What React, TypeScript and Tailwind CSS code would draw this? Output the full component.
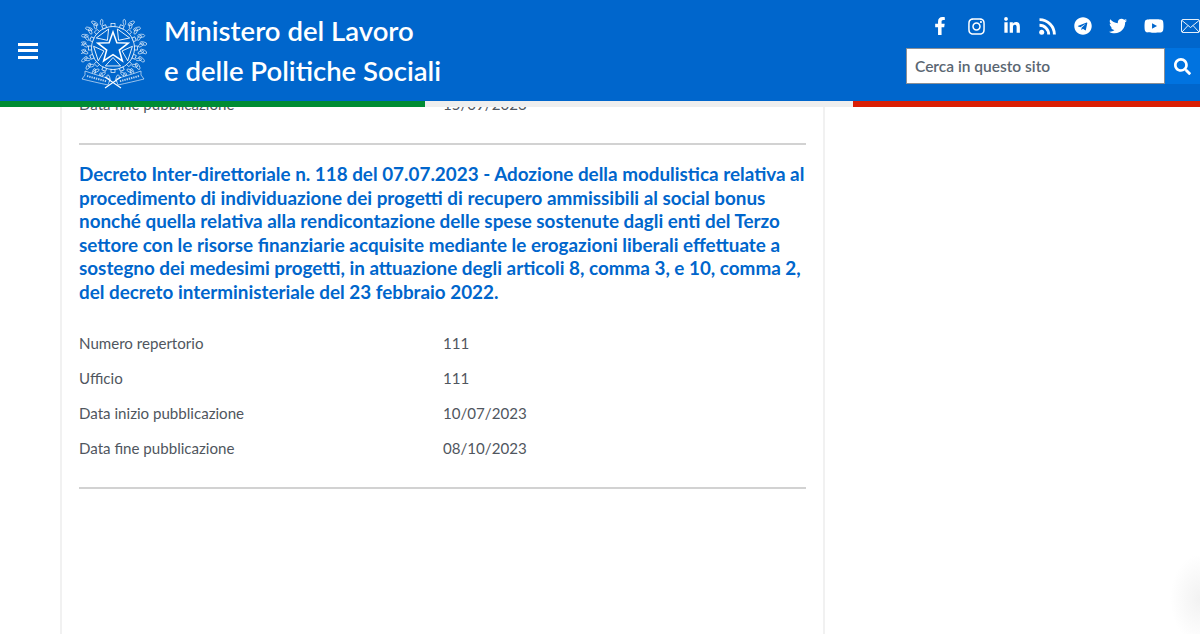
import { FaFacebookF, FaInstagram, FaLinkedinIn, FaTelegram, FaTwitter, FaYoutube, FaSearch } from 'react-icons/fa';

const rows = [
  { label: 'Numero repertorio', value: '111' },
  { label: 'Ufficio', value: '111' },
  { label: 'Data inizio pubblicazione', value: '10/07/2023' },
  { label: 'Data fine pubblicazione', value: '08/10/2023' },
];

// polar helper, 0deg points up
const p = (r: number, deg: number) => {
  const a = ((deg - 90) * Math.PI) / 180;
  return `${(32 + r * Math.cos(a)).toFixed(2)} ${(34 + r * Math.sin(a)).toFixed(2)}`;
};

function Emblem() {
  const wedges = [36, 108, 180, 252, 324];
  const star = Array.from({ length: 10 }, (_, i) => p(i % 2 ? 6.6 : 16, i * 36)).join(' L ');
  const teeth = Array.from({ length: 16 }, (_, i) => i * 22.5);
  const leftLeaves = [195, 210, 225, 240, 255, 270, 285, 300, 315, 330];
  const rightLeaves = [165, 150, 135, 120, 105, 90, 75, 60, 45, 30];
  return (
    <svg width="66" height="75" viewBox="0 0 66 75" fill="none" stroke="#fff" strokeWidth="0.6" className="shrink-0">
      {/* wreath */}
      {leftLeaves.map((a) => (
        <g key={a} transform={`rotate(${a} 32 34)`}>
          <ellipse cx="28.5" cy="3.5" rx="1.5" ry="3.6" transform="rotate(-28 28.5 3.5)" />
          <ellipse cx="35" cy="6" rx="1.3" ry="3" transform="rotate(35 35 6)" />
        </g>
      ))}
      {rightLeaves.map((a) => (
        <g key={a} transform={`rotate(${a} 32 34)`}>
          <ellipse cx="35.5" cy="3.5" rx="1.6" ry="3.6" transform="rotate(28 35.5 3.5)" />
          <ellipse cx="29" cy="6" rx="1.3" ry="3" transform="rotate(-35 29 6)" />
        </g>
      ))}
      {/* gear */}
      <circle cx="32" cy="34" r="21.5" strokeWidth="0.8" />
      {teeth.map((a) => (
        <rect key={a} x="30" y="9.6" width="4" height="3" transform={`rotate(${a} 32 34)`} fill="#0066cc" strokeWidth="0.7" />
      ))}
      {/* pieces between the star arms */}
      {wedges.map((a) => (
        <path key={a} d={`M ${p(9.5, a)} L ${p(19.5, a - 23)} L ${p(19.5, a + 23)} Z`} strokeWidth="0.9" />
      ))}
      <path d={`M ${star} Z`} fill="#0066cc" strokeWidth="1.5" strokeLinejoin="miter" />
      {/* ribbon */}
      <path d="M4 57 C12 60 20 62 29 65 L27 71 C18 69 9 67 1 65 L4 61 Z" fill="#0066cc" />
      <path d="M60 57 C52 60 44 62 35 65 L37 71 C46 69 55 67 63 65 L60 61 Z" fill="#0066cc" />
      <path d="M6 62 L26 67.5 M58 62 L38 67.5" strokeWidth="2" strokeDasharray="1.4 0.9" opacity="0.7" />
      <path d="M24 63 L40 74 M40 63 L24 74" strokeWidth="1.1" />
    </svg>
  );
}

function RssIcon() {
  return (
    <svg width="17" height="17" viewBox="0 0 17 17" fill="none" stroke="#fff" strokeWidth="2.9">
      <circle cx="2.7" cy="14.3" r="2.5" fill="#fff" stroke="none" />
      <path d="M0.5 7.3 A9.2 9.2 0 0 1 9.7 16.5" />
      <path d="M0.5 1.6 A14.9 14.9 0 0 1 15.4 16.5" />
    </svg>
  );
}

function MailIcon() {
  return (
    <svg width="19" height="14" viewBox="0 0 19 14" fill="none" stroke="#fff" strokeWidth="0.9">
      <rect x="0.5" y="0.5" width="18" height="13" rx="1.5" />
      <path d="M1 1.5 L9.5 8.5 L18 1.5 M1 13 L7 6.5 M18 13 L12 6.5" />
    </svg>
  );
}

const socials = [
  <FaFacebookF size={18} />,
  <FaInstagram size={19} />,
  <FaLinkedinIn size={18} />,
  <RssIcon />,
  <FaTelegram size={18} />,
  <FaTwitter size={18} />,
  <FaYoutube size={20} />,
];

export default function App() {
  return (
    <div className="relative h-[634px] w-[1200px] overflow-hidden bg-white font-['Lato','Noto_Sans',sans-serif]">
      <header className="absolute inset-x-0 top-0 z-10">
        <div className="flex h-[101px] items-center bg-[#0066cc]">
          <button className="ml-[18px] flex w-[20px] flex-col gap-[3.5px]">
            <span className="h-[3px] bg-white" />
            <span className="h-[3px] bg-white" />
            <span className="h-[3px] bg-white" />
          </button>
          <div className="ml-[43px] mt-[1px]">
            <Emblem />
          </div>
          <div className="ml-[17px] flex flex-col text-[27.5px] font-semibold leading-[40px] text-white">
            <span>Ministero del Lavoro</span>
            <span>e delle Politiche Sociali</span>
          </div>
          <div className="ml-auto flex flex-col items-end self-start">
            <div className="mt-[16px] flex h-[20px] items-center text-white">
              {socials.map((icon, i) => (
                <div key={i} className="flex w-[35.6px] justify-center">
                  {icon}
                </div>
              ))}
              <div className="flex w-[28.2px] justify-end pr-[0.5px]">
                <MailIcon />
              </div>
            </div>
            <div className="mt-[12px] flex h-[36px]">
              <div className="flex w-[259px] items-center border border-[#8a8f96] bg-white pl-[8px] pt-[1px] text-[15.5px] font-semibold text-[#5a6672]">
                Cerca in questo sito
              </div>
              <div className="flex w-[35px] items-center justify-center bg-[#0073e0] text-white">
                <FaSearch size={17} />
              </div>
            </div>
          </div>
        </div>
        <div className="flex h-[6px]">
          <div className="w-[425px] bg-[#008c33]" />
          <div className="w-[428px] bg-[#eeeeee]" />
          <div className="flex-1 bg-[#d91e05]" />
        </div>
      </header>

      <main className="ml-[60px] h-full w-[765px] border-x-2 border-[#f1f1f1] px-[17px] pt-[93px]">
        <div className="flex h-[20px] items-start text-[15.1px] text-[#50565e]">
          <span className="w-[364px]">Data fine pubblicazione</span>
          <span>15/09/2023</span>
        </div>
        <hr className="mt-[30px] border-t-2 border-[#d2d2d2]" />
        <h2 className="mt-[17px] text-[18.85px] font-bold leading-[23.5px] text-[#0066cc]">
          Decreto Inter-direttoriale n. 118 del 07.07.2023 - Adozione della modulistica relativa al procedimento di individuazione dei progetti di recupero ammissibili al social bonus nonché quella relativa alla rendicontazione delle spese sostenute dagli enti del Terzo settore con le risorse finanziarie acquisite mediante le erogazioni liberali effettuate a sostegno dei medesimi progetti, in attuazione degli articoli 8, comma 3, e 10, comma 2, del decreto interministeriale del 23 febbraio 2022.
        </h2>
        <div className="mt-[22.5px] flex flex-col text-[15.1px] leading-[35.2px] text-[#50565e]">
          {rows.map((r) => (
            <div key={r.label} className="flex">
              <span className="w-[364px]">{r.label}</span>
              <span>{r.value}</span>
            </div>
          ))}
        </div>
        <hr className="mt-[21px] border-t-2 border-[#d2d2d2]" />
      </main>
      <div className="absolute -bottom-[10px] right-0 h-[90px] w-[30px] bg-[radial-gradient(ellipse_at_right,#f2f2f2,transparent_70%)]" />
    </div>
  );
}
